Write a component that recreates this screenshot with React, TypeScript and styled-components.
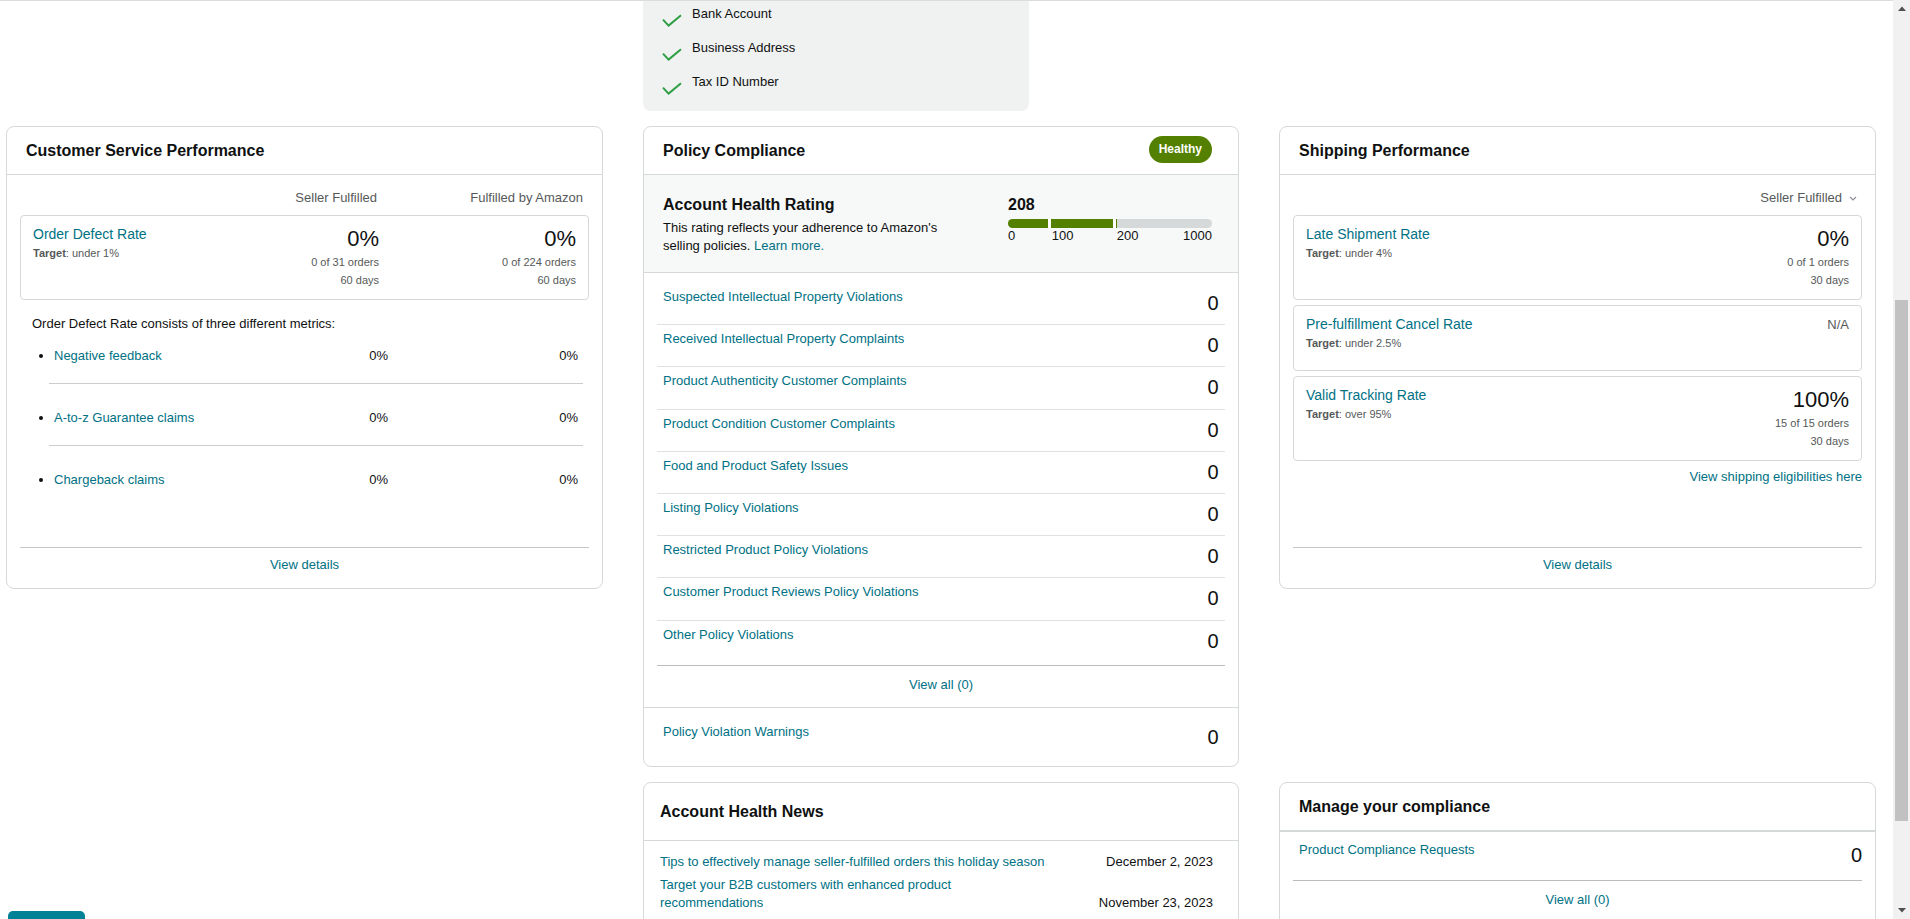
import React from "react";
import styled, { createGlobalStyle } from "styled-components";

const Global = createGlobalStyle`
  html, body { margin: 0; padding: 0; background: #fff; overflow: hidden; }
  body {
    font-family: "Liberation Sans", Arial, sans-serif;
    color: #0f1111;
    font-size: 13px;
    line-height: 20px;
  }
  * { box-sizing: border-box; }
`;

const TEAL = "#007185";
const LINE = "#d5d9d9";
const GREEN = "#538000";

const Screen = styled.div`
  position: relative;
  display: flex;
  width: 1910px;
  height: 919px;
  overflow: hidden;
`;

const Viewport = styled.main`
  flex: 1;
  min-width: 0;
  height: 919px;
  border-top: 1px solid #dcdcdc;
  overflow: hidden;
`;

const Grid = styled.div`
  display: grid;
  grid-template-columns: 597px 596px 597px;
  grid-template-areas:
    ". verify ."
    "cs policy ship"
    ". news manage";
  column-gap: 40px;
  row-gap: 15px;
  padding-left: 6px;
  align-items: start;
`;

const Area = styled.div<{ $area: string }>`
  grid-area: ${(p) => p.$area};
  min-width: 0;
`;

/* ---------- verification box ---------- */
const VerifyBox = styled.div`
  width: 386px;
  height: 110px;
  background: #f0f2f2;
  border-radius: 0 0 8px 8px;
  padding: 3px 19px 0;
  display: flex;
  flex-direction: column;
  gap: 14px;
`;

const VerifyItem = styled.div`
  display: flex;
  align-items: flex-start;
  gap: 10px;
  height: 20px;
  color: #0f1111;
  font-size: 13px;
`;

const CheckIcon = styled.svg`
  flex: none;
  margin-top: 10px;
`;

/* ---------- cards ---------- */
const Card = styled.section<{ $height?: number; $minHeight?: number }>`
  display: flex;
  flex-direction: column;
  background: #fff;
  border: 1px solid ${LINE};
  border-radius: 8px;
  overflow: hidden;
  ${(p) => (p.$height ? `height: ${p.$height}px;` : "")}
  ${(p) => (p.$minHeight ? `min-height: ${p.$minHeight}px;` : "")}
`;

const CardHeader = styled.header<{ $tall?: boolean; $thick?: boolean; $padLeft?: number }>`
  display: flex;
  align-items: center;
  justify-content: space-between;
  flex: none;
  height: ${(p) => (p.$tall ? 58 : p.$thick ? 49 : 48)}px;
  padding: 0 26px 0 ${(p) => p.$padLeft ?? 19}px;
  border-bottom: ${(p) => (p.$thick ? 2 : 1)}px solid ${LINE};
`;

const CardTitle = styled.h2`
  margin: 0;
  font-size: 16px;
  line-height: 20px;
  font-weight: 700;
  color: #0f1111;
`;

const Badge = styled.span`
  display: inline-flex;
  align-items: center;
  height: 27px;
  padding: 0 10px;
  margin-top: -3px;
  border-radius: 14px;
  background: ${GREEN};
  color: #fff;
  font-size: 12px;
  font-weight: 700;
`;

const CardBody = styled.div<{ $pt?: number }>`
  flex: 1;
  display: flex;
  flex-direction: column;
  padding: ${(p) => p.$pt ?? 13}px 13px 0;
  min-height: 0;
`;

const Link = styled.a`
  color: ${TEAL};
  text-decoration: none;
  cursor: pointer;
`;

const ColumnHeads = styled.div`
  display: grid;
  grid-template-columns: 1fr 206px 206px;
  padding-right: 6px;
  margin-bottom: 7px;
  color: #565959;
  text-align: right;
`;

const MetricBox = styled.div<{ $cols: string }>`
  display: grid;
  grid-template-columns: ${(p) => p.$cols};
  align-items: start;
  min-height: 66px;
  padding: 9px 12px 10px;
  border: 1px solid ${LINE};
  border-radius: 4px;
`;

const MetricName = styled(Link)`
  display: block;
  font-size: 14px;
  line-height: 19px;
`;

const Target = styled.div`
  font-size: 11px;
  line-height: 18px;
  color: #565959;
  b { font-weight: 700; }
`;

const MetricValue = styled.div`
  text-align: right;
`;

const BigNum = styled.div`
  font-size: 22px;
  line-height: 28px;
  color: #0f1111;
`;

const SubNote = styled.div`
  font-size: 11px;
  line-height: 18px;
  color: #565959;
`;

const NA = styled.div`
  text-align: right;
  font-size: 13px;
  line-height: 19px;
  color: #565959;
`;

const Intro = styled.p`
  margin: 14px 0 0;
  padding-left: 12px;
  color: #0f1111;
`;

const SubList = styled.ul`
  list-style: none;
  margin: 0;
  padding: 0 6px 0 29px;
`;

const SubItem = styled.li`
  display: grid;
  grid-template-columns: 1fr 190px 190px;
  padding: 12px 5px 17px 5px;
  border-bottom: 1px solid #c9cdcd;
  & + & { margin-top: 12px; }
  &:last-child { border-bottom: none; }
`;

const Dot = styled.span`
  display: inline-block;
  width: 4px;
  height: 4px;
  border-radius: 50%;
  background: #0f1111;
  vertical-align: middle;
  margin: 0 11px 2px -15px;
`;

const Pct = styled.span`
  text-align: right;
  color: #0f1111;
`;

const CardFooter = styled.div`
  margin-top: auto;
  height: 41px;
  padding-top: 7px;
  border-top: 1px solid #c4c8c8;
  text-align: center;
`;

/* ---------- shipping ---------- */
const Dropdown = styled.div`
  display: flex;
  justify-content: flex-end;
  align-items: center;
  gap: 7px;
  padding-right: 5px;
  margin-bottom: 7px;
  color: #565959;
`;

const BoxStack = styled.div`
  display: flex;
  flex-direction: column;
  gap: 5px;
`;

const EligLink = styled(Link)`
  display: block;
  margin-top: 6px;
  text-align: right;
`;

/* ---------- policy ---------- */
const RatingSection = styled.div`
  display: flex;
  justify-content: space-between;
  padding: 20px 26px 17px 19px;
  background: #f7f8f8;
  border-bottom: 1px solid ${LINE};
`;

const RatingText = styled.div`
  width: 295px;
`;

const RatingTitle = styled.h3`
  margin: 0;
  font-size: 16px;
  line-height: 20px;
  font-weight: 700;
`;

const RatingDesc = styled.p`
  margin: 4px 0 0;
  line-height: 18px;
`;

const Meter = styled.div`
  width: 204px;
`;

const Score = styled.div`
  font-size: 16px;
  line-height: 20px;
  font-weight: 700;
`;

const Bar = styled.div`
  display: flex;
  height: 8.5px;
  margin-top: 4px;
  border-radius: 5px;
  overflow: hidden;
  background: ${LINE};
`;

const Seg = styled.div<{ $w: number; $gap?: boolean }>`
  flex: none;
  width: ${(p) => p.$w}px;
  background: ${(p) => (p.$gap ? "#fff" : GREEN)};
`;

const Scale = styled.div`
  display: flex;
  font-size: 13px;
  line-height: 15px;
`;

const Tick = styled.span<{ $w?: number }>`
  ${(p) => (p.$w ? `width: ${p.$w}px; flex: none;` : "flex: 1;")}
  &:last-child { text-align: right; }
`;

const PolicyList = styled.div`
  padding: 10px 13px 0;
`;

const PolicyRow = styled.div`
  display: flex;
  justify-content: space-between;
  align-items: flex-start;
  height: 42.2px;
  padding: 0 6.5px 0 6px;
  border-bottom: 1px solid #dfe2e2;
  &:last-child {
    border-bottom: none;
    height: 44.5px;
  }
`;

const RowLabel = styled(Link)`
  margin-top: 4px;
  line-height: 20px;
`;

const RowValue = styled.span`
  margin-top: 6px;
  font-size: 20px;
  line-height: 28px;
  color: #0f1111;
`;

const ViewAll = styled.div`
  height: 42px;
  padding-top: 9px;
  margin: 0 13px;
  border-top: 1px solid #b9bdbd;
  text-align: center;
`;

const WarnSection = styled.div`
  display: flex;
  justify-content: space-between;
  align-items: flex-start;
  height: 59px;
  padding: 0 19.5px 0 19px;
  border-top: 1px solid ${LINE};
`;

const WarnLabel = styled(Link)`
  margin-top: 14px;
`;

const WarnValue = styled(RowValue)`
  margin-top: 15px;
`;

/* ---------- news ---------- */
const NewsBody = styled.div`
  padding: 12px 25px 0 16px;
  display: flex;
  flex-direction: column;
  gap: 5px;
`;

const NewsItem = styled.div`
  display: grid;
  grid-template-columns: 392px 1fr;
  align-items: end;
  line-height: 18px;
`;

const NewsDate = styled.span`
  text-align: right;
  color: #0f1111;
`;

/* ---------- manage ---------- */
const ManageRow = styled.div`
  display: flex;
  justify-content: space-between;
  align-items: flex-start;
  height: 49px;
  padding-left: 6px;
  border-bottom: 1px solid #b9bdbd;
`;

const ManageLabel = styled(Link)`
  margin-top: 8px;
`;

const ManageValue = styled(RowValue)`
  margin-top: 9px;
`;

const ManageViewAll = styled.div`
  padding-top: 9px;
  text-align: center;
`;

/* ---------- scrollbar + floating button ---------- */
const ScrollTrack = styled.div`
  flex: none;
  width: 17px;
  height: 919px;
  background: #f1f1f1;
  display: flex;
  flex-direction: column;
  align-items: center;
`;

const ScrollArrow = styled.div`
  flex: none;
  width: 17px;
  height: 17px;
  display: flex;
  align-items: center;
  justify-content: center;
`;

const ScrollGap = styled.div<{ $h: number }>`
  flex: none;
  height: ${(p) => p.$h}px;
`;

const ScrollThumb = styled.div`
  flex: none;
  width: 13px;
  height: 521px;
  background: #c1c1c1;
`;

const ScrollFill = styled.div`
  flex: 1;
`;

const FloatButton = styled.button`
  position: absolute;
  left: 8px;
  top: 911px;
  width: 77px;
  height: 30px;
  border: none;
  border-radius: 5px 5px 0 0;
  background: #008296;
  color: #fff;
  font-family: "Liberation Sans", Arial, sans-serif;
  font-size: 11px;
  font-weight: 700;
  padding: 6px 0 0;
  line-height: 14px;
`;

const Check = () => (
  <CheckIcon width="20" height="13" viewBox="0 0 20 13">
    <polyline points="1,5.6 6.6,11.6 19,1.2" fill="none" stroke="#2f9e44" strokeWidth="2" />
  </CheckIcon>
);

const Chevron = () => (
  <svg width="8" height="5" viewBox="0 0 8 5">
    <polyline points="1,1 4,4 7,1" fill="none" stroke="#8d9096" strokeWidth="1.2" />
  </svg>
);

const policyRows = [
  "Suspected Intellectual Property Violations",
  "Received Intellectual Property Complaints",
  "Product Authenticity Customer Complaints",
  "Product Condition Customer Complaints",
  "Food and Product Safety Issues",
  "Listing Policy Violations",
  "Restricted Product Policy Violations",
  "Customer Product Reviews Policy Violations",
  "Other Policy Violations",
];

const subMetrics = ["Negative feedback", "A-to-z Guarantee claims", "Chargeback claims"];

export default function App() {
  return (
    <>
      <Global />
      <Screen>
        <Viewport>
          <Grid>
            <Area $area="verify">
              <VerifyBox>
                {["Bank Account", "Business Address", "Tax ID Number"].map((t) => (
                  <VerifyItem key={t}>
                    <Check />
                    <span>{t}</span>
                  </VerifyItem>
                ))}
              </VerifyBox>
            </Area>

            <Area $area="cs">
              <Card $height={463}>
                <CardHeader>
                  <CardTitle>Customer Service Performance</CardTitle>
                </CardHeader>
                <CardBody>
                  <ColumnHeads>
                    <span />
                    <span>Seller Fulfilled</span>
                    <span>Fulfilled by Amazon</span>
                  </ColumnHeads>
                  <MetricBox $cols="1fr 197px 197px">
                    <div>
                      <MetricName>Order Defect Rate</MetricName>
                      <Target>
                        <b>Target</b>: under 1%
                      </Target>
                    </div>
                    <MetricValue>
                      <BigNum>0%</BigNum>
                      <SubNote>0 of 31 orders</SubNote>
                      <SubNote>60 days</SubNote>
                    </MetricValue>
                    <MetricValue>
                      <BigNum>0%</BigNum>
                      <SubNote>0 of 224 orders</SubNote>
                      <SubNote>60 days</SubNote>
                    </MetricValue>
                  </MetricBox>
                  <Intro>Order Defect Rate consists of three different metrics:</Intro>
                  <SubList>
                    {subMetrics.map((m) => (
                      <SubItem key={m}>
                        <span>
                          <Dot />
                          <Link>{m}</Link>
                        </span>
                        <Pct>0%</Pct>
                        <Pct>0%</Pct>
                      </SubItem>
                    ))}
                  </SubList>
                  <CardFooter>
                    <Link>View details</Link>
                  </CardFooter>
                </CardBody>
              </Card>
            </Area>

            <Area $area="policy">
              <Card>
                <CardHeader>
                  <CardTitle>Policy Compliance</CardTitle>
                  <Badge>Healthy</Badge>
                </CardHeader>
                <RatingSection>
                  <RatingText>
                    <RatingTitle>Account Health Rating</RatingTitle>
                    <RatingDesc>
                      This rating reflects your adherence to Amazon's selling policies.{" "}
                      <Link>Learn more.</Link>
                    </RatingDesc>
                  </RatingText>
                  <Meter>
                    <Score>208</Score>
                    <Bar>
                      <Seg $w={40} />
                      <Seg $w={3} $gap />
                      <Seg $w={61.7} />
                      <Seg $w={3} $gap />
                      <Seg $w={1.6} />
                    </Bar>
                    <Scale>
                      <Tick $w={43.7}>0</Tick>
                      <Tick $w={65}>100</Tick>
                      <Tick>200</Tick>
                      <Tick>1000</Tick>
                    </Scale>
                  </Meter>
                </RatingSection>
                <PolicyList>
                  {policyRows.map((r) => (
                    <PolicyRow key={r}>
                      <RowLabel>{r}</RowLabel>
                      <RowValue>0</RowValue>
                    </PolicyRow>
                  ))}
                </PolicyList>
                <ViewAll>
                  <Link>View all (0)</Link>
                </ViewAll>
                <WarnSection>
                  <WarnLabel>Policy Violation Warnings</WarnLabel>
                  <WarnValue>0</WarnValue>
                </WarnSection>
              </Card>
            </Area>

            <Area $area="ship">
              <Card $height={463}>
                <CardHeader>
                  <CardTitle>Shipping Performance</CardTitle>
                </CardHeader>
                <CardBody>
                  <Dropdown>
                    <span>Seller Fulfilled</span>
                    <Chevron />
                  </Dropdown>
                  <BoxStack>
                    <MetricBox $cols="1fr auto">
                      <div>
                        <MetricName>Late Shipment Rate</MetricName>
                        <Target>
                          <b>Target</b>: under 4%
                        </Target>
                      </div>
                      <MetricValue>
                        <BigNum>0%</BigNum>
                        <SubNote>0 of 1 orders</SubNote>
                        <SubNote>30 days</SubNote>
                      </MetricValue>
                    </MetricBox>
                    <MetricBox $cols="1fr auto">
                      <div>
                        <MetricName>Pre-fulfillment Cancel Rate</MetricName>
                        <Target>
                          <b>Target</b>: under 2.5%
                        </Target>
                      </div>
                      <NA>N/A</NA>
                    </MetricBox>
                    <MetricBox $cols="1fr auto">
                      <div>
                        <MetricName>Valid Tracking Rate</MetricName>
                        <Target>
                          <b>Target</b>: over 95%
                        </Target>
                      </div>
                      <MetricValue>
                        <BigNum>100%</BigNum>
                        <SubNote>15 of 15 orders</SubNote>
                        <SubNote>30 days</SubNote>
                      </MetricValue>
                    </MetricBox>
                  </BoxStack>
                  <EligLink>View shipping eligibilities here</EligLink>
                  <CardFooter>
                    <Link>View details</Link>
                  </CardFooter>
                </CardBody>
              </Card>
            </Area>

            <Area $area="news">
              <Card $minHeight={220}>
                <CardHeader $tall $padLeft={16}>
                  <CardTitle>Account Health News</CardTitle>
                </CardHeader>
                <NewsBody>
                  <NewsItem>
                    <Link>Tips to effectively manage seller-fulfilled orders this holiday season</Link>
                    <NewsDate>December 2, 2023</NewsDate>
                  </NewsItem>
                  <NewsItem>
                    <Link>Target your B2B customers with enhanced product recommendations</Link>
                    <NewsDate>November 23, 2023</NewsDate>
                  </NewsItem>
                </NewsBody>
              </Card>
            </Area>

            <Area $area="manage">
              <Card $minHeight={220}>
                <CardHeader $thick>
                  <CardTitle>Manage your compliance</CardTitle>
                </CardHeader>
                <CardBody $pt={0}>
                  <ManageRow>
                    <ManageLabel>Product Compliance Requests</ManageLabel>
                    <ManageValue>0</ManageValue>
                  </ManageRow>
                  <ManageViewAll>
                    <Link>View all (0)</Link>
                  </ManageViewAll>
                </CardBody>
              </Card>
            </Area>
          </Grid>
        </Viewport>
        <ScrollTrack>
          <ScrollArrow>
            <svg width="8" height="5" viewBox="0 0 8 5">
              <polygon points="0,5 4,0.5 8,5" fill="#505050" />
            </svg>
          </ScrollArrow>
          <ScrollGap $h={283} />
          <ScrollThumb />
          <ScrollFill />
          <ScrollArrow>
            <svg width="8" height="5" viewBox="0 0 8 5">
              <polygon points="0,0 4,4.5 8,0" fill="#505050" />
            </svg>
          </ScrollArrow>
        </ScrollTrack>
        <FloatButton>FEEDBACK</FloatButton>
      </Screen>
    </>
  );
}
